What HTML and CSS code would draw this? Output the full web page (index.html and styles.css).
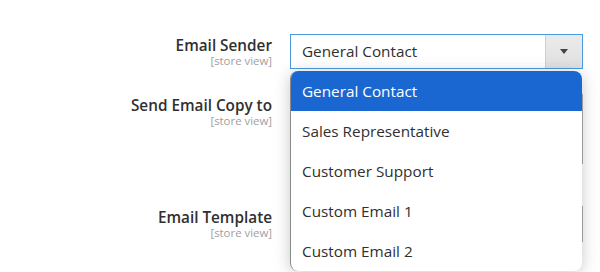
FILE: index.html
```html
<!DOCTYPE html>
<html>
<head>
<meta charset="utf-8">
<link rel="stylesheet" href="styles.css">
</head>
<body>
<div class="form">
  <div class="row row-sender">
    <div class="label">
      <span class="label-text">Email Sender</span>
      <span class="scope">[store view]</span>
    </div>
    <div class="control">
      <div class="select focused">
        <span class="select-value">General Contact</span>
        <span class="select-arrow"><span class="tri"></span></span>
      </div>
      <ul class="dropdown">
        <li class="option selected">General Contact</li>
        <li class="option">Sales Representative</li>
        <li class="option">Customer Support</li>
        <li class="option">Custom Email 1</li>
        <li class="option">Custom Email 2</li>
      </ul>
    </div>
  </div>
  <div class="row row-copy">
    <div class="label">
      <span class="label-text">Send Email Copy to</span>
      <span class="scope">[store view]</span>
    </div>
    <div class="control">
      <div class="field tall"></div>
    </div>
  </div>
  <div class="row row-template">
    <div class="label">
      <span class="label-text">Email Template</span>
      <span class="scope">[store view]</span>
    </div>
    <div class="control">
      <div class="field"></div>
    </div>
  </div>
</div>
</body>
</html>
```

FILE: styles.css
```css
* { box-sizing: border-box; }
html {
  overflow: hidden;
}
body {
  margin: 0;
  padding: 0;
  background: #ffffff;
  font-family: "Open Sans", "Noto Sans", sans-serif;
  color: #303030;
  height: 272px;
}
.form {
  padding-top: 34px;
  display: flex;
  flex-direction: column;
}
.row {
  display: flex;
  gap: 18px;
}
.row-copy { margin-top: 25px; }
.row-template { margin-top: 42px; }
.label {
  width: 272px;
  display: flex;
  flex-direction: column;
  align-items: flex-end;
  padding-top: 2px;
}
.label-text {
  font-size: 15.3px;
  font-weight: 600;
  line-height: 18px;
  color: #303030;
}
.scope {
  font-size: 11.4px;
  line-height: 12px;
  color: #a0a0a0;
  margin-top: 1px;
}
.control {
  width: 293px;
  position: relative;
}
.select {
  height: 35px;
  border: 1px solid #4a9be0;
  display: flex;
  align-items: stretch;
  background: #fff;
}
.select-value {
  flex: 1;
  padding-left: 11px;
  font-size: 15.3px;
  line-height: 33px;
  color: #303030;
}
.select-arrow {
  width: 37px;
  background: linear-gradient(#ebebeb, #e0e0e0);
  border-left: 1px solid #cfcfcf;
  display: flex;
  align-items: center;
  justify-content: center;
}
.tri {
  width: 0;
  height: 0;
  border-left: 4px solid transparent;
  border-right: 4px solid transparent;
  border-top: 5px solid #4a423d;
}
.field {
  height: 36px;
  border: 1px solid #adadad;
  background: #fff;
}
.field.tall { height: 70px; }
.dropdown {
  position: absolute;
  left: 0;
  top: 37px;
  width: 292px;
  margin: 0;
  padding: 0;
  list-style: none;
  background: #fff;
  border-left: 1px solid #8a8a8a;
  border-radius: 8px;
  overflow: hidden;
  box-shadow: 0 2px 16px rgba(0, 0, 0, 0.22);
  z-index: 2;
}
.option {
  height: 40px;
  line-height: 40px;
  padding-left: 11px;
  font-size: 15.3px;
  color: #303030;
}
.option.selected {
  background: #1a67d2;
  color: #ffffff;
}
```
